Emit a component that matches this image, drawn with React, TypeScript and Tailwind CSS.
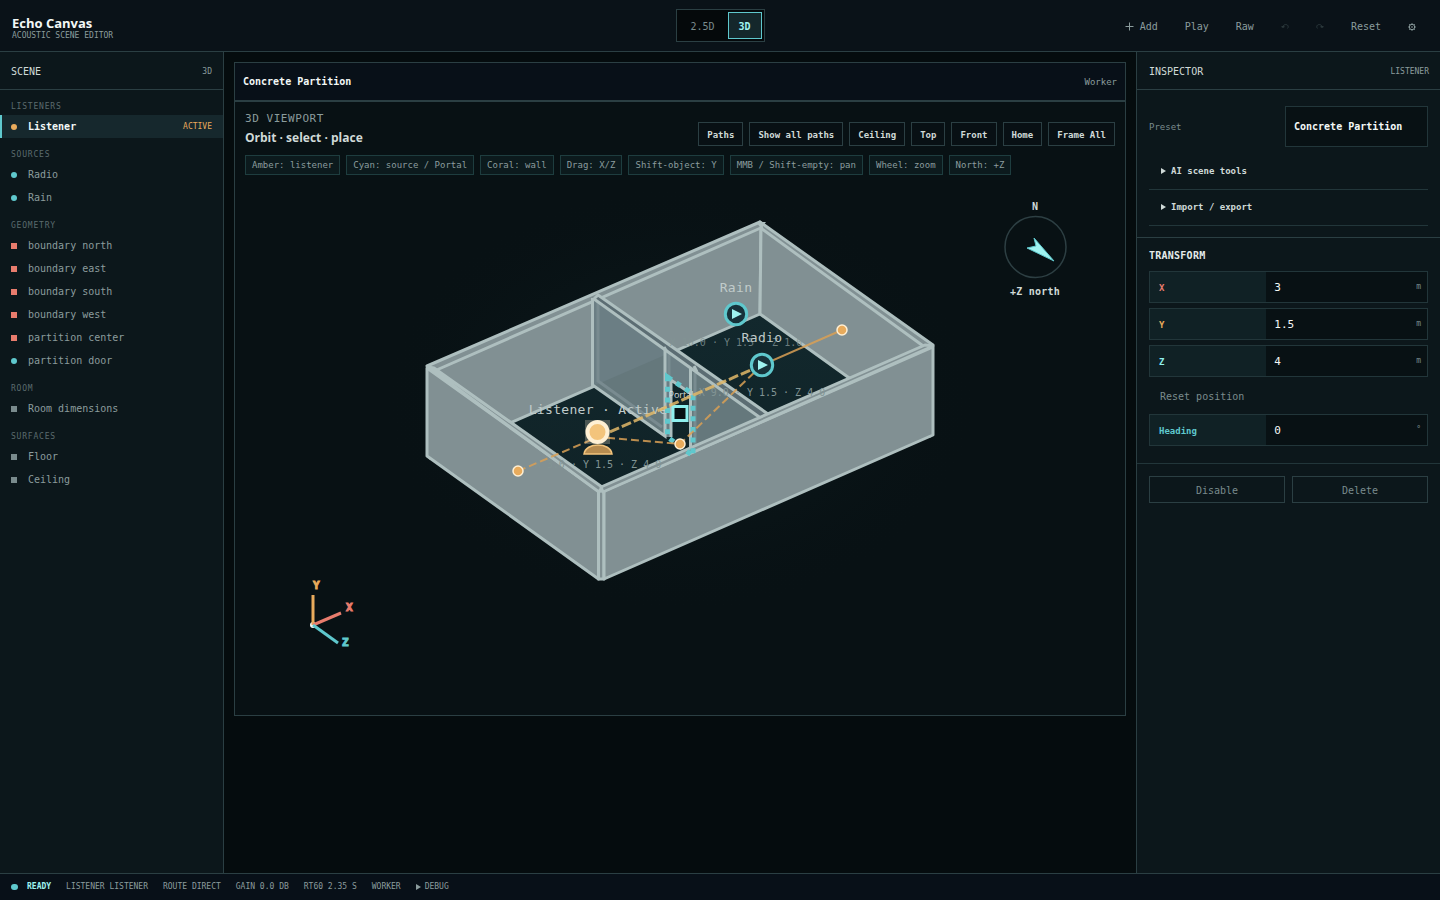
import { useState } from "react";

const sceneGroups = [
  { label: "Listeners", items: [{ name: "Listener", kind: "listener" }] },
  {
    label: "Sources",
    items: [
      { name: "Radio", kind: "source" },
      { name: "Rain", kind: "source" },
    ],
  },
  {
    label: "Geometry",
    items: [
      { name: "boundary north", kind: "wall" },
      { name: "boundary east", kind: "wall" },
      { name: "boundary south", kind: "wall" },
      { name: "boundary west", kind: "wall" },
      { name: "partition center", kind: "wall" },
      { name: "partition door", kind: "source" },
    ],
  },
  { label: "Room", items: [{ name: "Room dimensions", kind: "room" }] },
  {
    label: "Surfaces",
    items: [
      { name: "Floor", kind: "room" },
      { name: "Ceiling", kind: "room" },
    ],
  },
];

const markers: Record<string, string> = {
  listener: "rounded-full bg-[#e8ab5c]",
  source: "rounded-full bg-[#5fc8cd]",
  wall: "bg-[#e87c6d]",
  room: "bg-[#7a8b8d]",
};

const viewActions = ["Paths", "Show all paths", "Ceiling", "Top", "Front", "Home", "Frame All"];

const hints = [
  "Amber: listener",
  "Cyan: source / Portal",
  "Coral: wall",
  "Drag: X/Z",
  "Shift-object: Y",
  "MMB / Shift-empty: pan",
  "Wheel: zoom",
  "North: +Z",
];

const fields = [
  { id: "pos-x", label: "X", value: "3", color: "text-[#e87c6d]" },
  { id: "pos-y", label: "Y", value: "1.5", color: "text-[#e8ab5c]" },
  { id: "pos-z", label: "Z", value: "4", color: "text-[#8ff0ee]" },
];

const Triangle = () => (
  <svg width="5" height="6" viewBox="0 0 5 6" className="shrink-0 fill-current" aria-hidden="true">
    <path d="M0 0L5 3L0 6Z" />
  </svg>
);

const ToolButton = ({ children, label, disabled }: { children: React.ReactNode; label?: string; disabled?: boolean }) => (
  <button
    type="button"
    aria-label={label}
    disabled={disabled}
    className="flex h-8 items-center gap-1.5 border border-transparent px-3 pt-0.5 text-[#8b9c9d] disabled:text-[#2c3a3d]"
  >
    {children}
  </button>
);

const TopBar = () => {
  const [mode, setMode] = useState("3D");

  return (
    <header className="grid h-13 grid-cols-[1fr_auto_1fr] items-center border-b border-[#2b3f43] bg-[#0a1218] pr-[11px] pl-3">
      <div className="mt-1.5">
        <h1 className="font-['Open_Sans',sans-serif] text-[13px] leading-[14px] font-bold text-[#f3f8f7]">Echo Canvas</h1>
        <p className="text-[8px] leading-3 text-[#8b9c9d]">ACOUSTIC SCENE EDITOR</p>
      </div>
      <div className="flex gap-0.5 border border-[#2b3f43] bg-[#05090b] p-0.5">
        {["2.5D", "3D"].map((m) => (
          <button
            key={m}
            type="button"
            onClick={() => setMode(m)}
            className={`h-[27px] border px-2.5 pt-0.5 ${
              mode === m ? "border-[#5fc8cd] bg-[#14272b] font-bold text-[#9ff3f0]" : "border-transparent text-[#7a8b8d]"
            }`}
          >
            {m}
          </button>
        ))}
      </div>
      <div className="flex justify-end gap-px">
        <ToolButton>
          <svg width="9" height="9" viewBox="0 0 9 9" stroke="currentColor" aria-hidden="true">
            <path d="M4.5 0.5V8.5M0.5 4.5H8.5" />
          </svg>
          Add
        </ToolButton>
        <ToolButton>Play</ToolButton>
        <ToolButton>Raw</ToolButton>
        <ToolButton label="Undo" disabled>
          <svg width="8" height="8" viewBox="0 0 8 8" fill="none" stroke="currentColor" aria-hidden="true">
            <path d="M0.5 3.8H3.5M2 3.8C2 1.2 7 0.6 7.2 3.6C7.2 4.4 7 4.9 6.6 5.4" />
            <path d="M0.4 3.3L2 5.2L3.6 3.3Z" fill="currentColor" stroke="none" />
          </svg>
        </ToolButton>
        <ToolButton label="Redo" disabled>
          <svg width="8" height="8" viewBox="0 0 8 8" fill="none" stroke="currentColor" aria-hidden="true">
            <path d="M7.5 3.8H4.5M6 3.8C6 1.2 1 0.6 0.8 3.6C0.8 4.4 1 4.9 1.4 5.4" />
            <path d="M7.6 3.3L6 5.2L4.4 3.3Z" fill="currentColor" stroke="none" />
          </svg>
        </ToolButton>
        <ToolButton>Reset</ToolButton>
        <ToolButton label="Settings">
          <svg width="8" height="8" viewBox="0 0 8 8" fill="none" stroke="currentColor" aria-hidden="true">
            <circle cx="4" cy="4" r="2.7" />
            <circle cx="4" cy="4" r="0.4" />
            <path d="M4 0V1.2M4 6.8V8M0 4H1.2M6.8 4H8M1.1 1.1L2 2M6 6L6.9 6.9M1.1 6.9L2 6M6 2L6.9 1.1" strokeWidth="0.8" />
          </svg>
        </ToolButton>
      </div>
    </header>
  );
};

const SceneTree = () => {
  const [active, setActive] = useState("Listener");

  return (
    <aside className="border-r border-[#2b3f43] bg-[#0c171b]">
      <div className="flex h-[38px] items-center justify-between border-b border-[#2b3f43] px-[11px] pt-0.5">
        <h2 className="text-[#d0dad8]">SCENE</h2>
        <span className="text-[8px] text-[#8b9c9d]">3D</span>
      </div>
      <nav>
        {sceneGroups.map((group) => (
          <section key={group.label}>
            <h3 className="px-[11px] pt-[9px] text-[8px] leading-4 tracking-widest text-[#5b6b6e] uppercase">{group.label}</h3>
            {group.items.map((item) => (
              <button
                key={item.name}
                type="button"
                onClick={() => setActive(item.name)}
                className={`flex h-[23px] w-full items-center border-l-2 pr-[11px] pl-[9px] text-left ${
                  active === item.name
                    ? "border-[#5fc8cd] bg-[#16282d] font-bold text-[#f3f8f7]"
                    : "border-transparent text-[#8b9c9d]"
                }`}
              >
                <span className={`mr-[11px] size-1.5 ${markers[item.kind]}`} />
                {item.name}
                {item.kind === "listener" && <span className="ml-auto text-[8px] font-normal text-[#e8ab5c]">ACTIVE</span>}
              </button>
            ))}
          </section>
        ))}
      </nav>
    </aside>
  );
};

const Speaker = ({ x, y }: { x: number; y: number }) => (
  <g transform={`translate(${x} ${y})`}>
    <circle r="10.7" fill="#17323a" stroke="#5fc8cd" strokeWidth="3" />
    <path d="M-4 -5L6 0L-4 5Z" fill="#9ff3f0" />
  </g>
);

const RoomView = () => (
  <svg viewBox="235 185 890 530" className="block w-full" role="img" aria-label="3D view of the room">
    <defs>
      <radialGradient id="glow">
        <stop offset="0" stopColor="#0f2023" />
        <stop offset="1" stopColor="#081114" stopOpacity="0" />
      </radialGradient>
      <linearGradient id="floor" x1="0" y1="0" x2="0" y2="1">
        <stop offset="0" stopColor="#12282d" />
        <stop offset="1" stopColor="#0f2024" />
      </linearGradient>
    </defs>
    <ellipse cx="680" cy="400" rx="300" ry="215" fill="url(#glow)" />

    <path d="M758 314L930 436L601 579L430 457Z" fill="url(#floor)" />

    {/* back walls */}
    <g fill="#819093" stroke="#aebfbf" strokeWidth="3" strokeLinejoin="round">
      <path d="M428 368L761 226L760 314L430 458Z" />
      <path d="M761 226L930 349L930 436L760 314Z" />
      <path d="M427 366L760 222L763 227L432 372Z" />
      <path d="M760 222L933 345L926 348L762 229Z" />
    </g>
    <path d="M756 222H766L761 228Z" fill="#aebfbf" />

    {/* partition with the door opening */}
    <path d="M594 299L665 350V436L594 385Z" fill="#6b7e84" />
    <path d="M598 384L665 355V436L594 385Z" fill="#65787c" />
    <path d="M665 350L690 367V393L671 380V437H665Z" fill="#6b7e84" />
    <path d="M690 367L765 418L691 450Z" fill="#65787c" />
    <g fill="none" stroke="#798b90" strokeWidth="3">
      <path d="M598 302V381L662 427" />
      <path d="M669 353V378M695 373V444" />
    </g>
    <g fill="none" stroke="#aebfbf" strokeWidth="3">
      <path d="M592.5 298V385L665 436V350" />
      <path d="M671 437V380L690 393M690.5 367V450" />
    </g>
    <path d="M594 299L598 295L768 414L762 419Z" fill="#5c6d73" stroke="#aebfbf" strokeWidth="3" strokeLinejoin="round" />
    <path d="M664 347L667 352M694 366L697 372" stroke="#aebfbf" strokeWidth="3" />

    {/* front walls */}
    <g fill="#819093" stroke="#aebfbf" strokeWidth="3" strokeLinejoin="round">
      <path d="M598.5 491L604 491V579H598.5Z" />
      <path d="M427 368L598.5 491V579L427 456Z" />
      <path d="M604 491L933 347V435L604 579Z" />
      <path d="M428 367L434 368L602 487L599 492Z" />
      <path d="M601 487L925 345L933 346L603 492Z" />
    </g>

    <g fontSize="10" fill="#829494" textAnchor="middle">
      <text x="736" y="346" fillOpacity="0.8">
        X 10.0 · Y 1.5 · Z 1.0
      </text>
      <text x="762" y="396">X 9.0 · Y 1.5 · Z 4.0</text>
      <text x="598" y="468">X 3.0 · Y 1.5 · Z 4.0</text>
    </g>
    <g fontSize="13" fill="#c0cbca" textAnchor="middle" className="tracking-wide">
      <text x="736" y="292">Rain</text>
      <text x="762" y="342">Radio</text>
      <text x="598" y="414">Listener · Active</text>
    </g>

    {/* portal */}
    <text x="681" y="398" fontSize="9" fill="#d5dede" textAnchor="middle" className="font-['Open_Sans',sans-serif]">
      Portal
    </text>
    <path d="M667.5 377L693 394V456L667.5 437Z" fill="none" stroke="#5fc8cd" strokeWidth="5" strokeDasharray="5 5.6" />
    <rect x="673" y="406.5" width="14" height="14" fill="#071214" stroke="#8ff0ee" strokeWidth="3" />

    {/* propagation paths */}
    <g fill="none" stroke="#d9a055" strokeOpacity="0.85" strokeWidth="2">
      <path d="M518 471L598 437L680 444L762 365" strokeDasharray="8 4" />
      <path d="M762 365L842 330" />
      <path d="M598 437L762 365" stroke="#e2b868" strokeWidth="3" strokeDasharray="10 3" />
    </g>
    <g fill="#e8ab5c" stroke="#fff0d4" strokeWidth="1.5">
      <circle cx="518" cy="471" r="5" />
      <circle cx="680" cy="444" r="5" />
      <circle cx="842" cy="330" r="5" />
    </g>

    <Speaker x={736} y={314} />
    <Speaker x={762} y={365} />

    <rect x="585" y="420" width="25" height="24" fill="#fff0d4" fillOpacity="0.25" />
    <circle cx="597.5" cy="432" r="10" fill="#f3c47c" stroke="#fff0d4" strokeWidth="4" />
    <path d="M584 454C585 448 591 445 598 445C605 445 611 448 612 454Z" fill="#b78c50" stroke="#f3c47c" strokeWidth="1.5" />

    {/* compass */}
    <circle cx="1035.5" cy="247" r="30.5" fill="none" stroke="#2d3f43" strokeWidth="1.5" />
    <path d="M1034 238L1054 261L1027 248L1036 246Z" fill="#9ff3f0" stroke="#5fc8cd" />
    <g fontSize="10" fontWeight="600" fill="#d0dad8" textAnchor="middle">
      <text x="1035" y="210">N</text>
      <text x="1035" y="295" className="tracking-wide">+Z north</text>
    </g>

    {/* axis gizmo */}
    <g strokeWidth="3" fontSize="11" fontWeight="700">
      <circle cx="313" cy="625" r="3" fill="#f3f8f7" />
      <path d="M313 625V595" stroke="#e8ab5c" />
      <path d="M313 625L341 613" stroke="#e87c6d" />
      <path d="M313 625L338 643" stroke="#5fc8cd" />
      <g strokeWidth="1">
        <text x="313" y="589" fill="#e8ab5c" stroke="#e8ab5c">Y</text>
        <text x="346" y="611" fill="#e87c6d" stroke="#e87c6d">X</text>
        <text x="342" y="646" fill="#5fc8cd" stroke="#5fc8cd">Z</text>
      </g>
    </g>
  </svg>
);

const Viewport = () => (
  <main className="bg-[#050c0e] p-2.5">
    <div className="border border-[#2b3f43] bg-[#081114]">
      <div className="flex h-[39px] items-center justify-between border-b-2 border-[#2b3f43] bg-[#081018] px-2">
        <h2 className="font-bold text-[#f3f8f7]">Concrete Partition</h2>
        <span className="text-[9px] text-[#8b9c9d]">Worker</span>
      </div>
      <div className="flex items-end justify-between px-2.5 pt-[9px]">
        <div>
          <p className="text-[11px] leading-4 tracking-wider text-[#8b9c9d]">3D VIEWPORT</p>
          <h3 className="pt-[3px] font-['Open_Sans',sans-serif] text-[12px] leading-4 font-bold text-[#d0dad8]">Orbit · select · place</h3>
        </div>
        <div className="flex flex-wrap gap-1.5">
          {viewActions.map((action) => (
            <button
              key={action}
              type="button"
              className="h-6 border border-[#2b3f43] bg-[#081014] px-2 pt-px text-[9px] font-bold text-[#d0dad8]"
            >
              {action}
            </button>
          ))}
        </div>
      </div>
      <ul className="flex flex-wrap gap-1.5 px-2.5 pt-[9px] pb-2.5">
        {hints.map((hint) => (
          <li key={hint} className="border border-[#1e3d3f] bg-[#0c1a1d] px-1.5 text-[9px] leading-[18px] text-[#8b9c9d]">
            {hint}
          </li>
        ))}
      </ul>
      <RoomView />
    </div>
  </main>
);

const Field = ({ id, label, value, color, unit }: { id: string; label: string; value: string; color: string; unit: string }) => (
  <div className="grid h-8 grid-cols-[42%_1fr_auto] items-center border border-[#22363a] bg-[#081114]">
    <label htmlFor={id} className={`flex h-full items-center bg-[#102125] pt-px pl-[9px] text-[9px] font-bold ${color}`}>
      {label}
    </label>
    <input id={id} defaultValue={value} className="w-full min-w-0 bg-transparent pt-px pl-2 text-[11px] text-[#f3f8f7] outline-none" />
    <span className="pr-1.5 text-[8px] text-[#7a8b8d]">{unit}</span>
  </div>
);

const Inspector = () => (
  <aside className="border-l border-[#2b3f43] bg-[#0c171b]">
    <div className="flex h-[38px] items-center justify-between border-b border-[#2b3f43] pt-0.5 pr-[11px] pl-3">
      <h2 className="text-[#d0dad8]">INSPECTOR</h2>
      <span className="text-[8px] text-[#8b9c9d]">LISTENER</span>
    </div>
    <section className="border-b border-[#2b3f43] px-3 pt-4 pb-[11px]">
      <div className="mb-[7px] flex items-center justify-between">
        <label htmlFor="preset" className="text-[9px] text-[#7a8b8d]">
          Preset
        </label>
        <select
          id="preset"
          className="h-[41px] w-[143px] appearance-none border border-[#22363a] bg-[#081114] px-2 font-bold text-[#f3f8f7]"
        >
          <option>Concrete Partition</option>
        </select>
      </div>
      {["AI scene tools", "Import / export"].map((title) => (
        <details key={title} className="border-b border-[#22363a]">
          <summary className="flex h-[35px] list-none items-center gap-[5px] px-3 pb-px text-[9px] font-bold text-[#d0dad8]">
            <Triangle />
            {title}
          </summary>
        </details>
      ))}
    </section>
    <section className="border-b border-[#22363a] px-3 pt-2.5 pb-[17px]">
      <h3 className="pb-[7px] leading-4 font-bold tracking-wide text-[#e4ebea]">TRANSFORM</h3>
      <div className="flex flex-col gap-[5px]">
        {fields.map((field) => (
          <Field key={field.id} {...field} unit="m" />
        ))}
      </div>
      <button type="button" className="flex h-[37px] items-center px-[11px] pt-0.5 text-[#7a8b8d]">
        Reset position
      </button>
      <Field id="heading" label="Heading" value="0" color="text-[#5fc8cd]" unit="°" />
    </section>
    <div className="grid grid-cols-2 gap-[7px] px-3 pt-3">
      <button type="button" className="h-[27px] border border-[#2b3f43] pt-0.5 text-[#7a8b8d]">
        Disable
      </button>
      <button type="button" className="h-[27px] border border-[#2b3f43] pt-0.5 text-[#7a8b8d]">
        Delete
      </button>
    </div>
  </aside>
);

const StatusBar = () => (
  <footer className="flex h-[27px] items-center gap-[15px] border-t border-[#2b3f43] bg-[#081018] px-[11px] text-[8px] text-[#8b9c9d]">
    <span className="flex items-center gap-[9px] font-bold text-[#9ff3f0]">
      <span className="h-1.5 w-[7px] rounded-full bg-[#5fc8cd]" />
      READY
    </span>
    <span>LISTENER LISTENER</span>
    <span>ROUTE DIRECT</span>
    <span>GAIN 0.0 DB</span>
    <span>RT60 2.35 S</span>
    <span>WORKER</span>
    <button type="button" className="flex items-center gap-1">
      <Triangle />
      DEBUG
    </button>
  </footer>
);

export default function App() {
  return (
    <div className="flex min-h-screen flex-col bg-[#050c0e] font-['DejaVu_Sans_Mono',monospace] text-[10px] leading-4">
      <TopBar />
      <div className="grid flex-1 grid-cols-[224px_minmax(0,1fr)_304px]">
        <SceneTree />
        <Viewport />
        <Inspector />
      </div>
      <StatusBar />
    </div>
  );
}
